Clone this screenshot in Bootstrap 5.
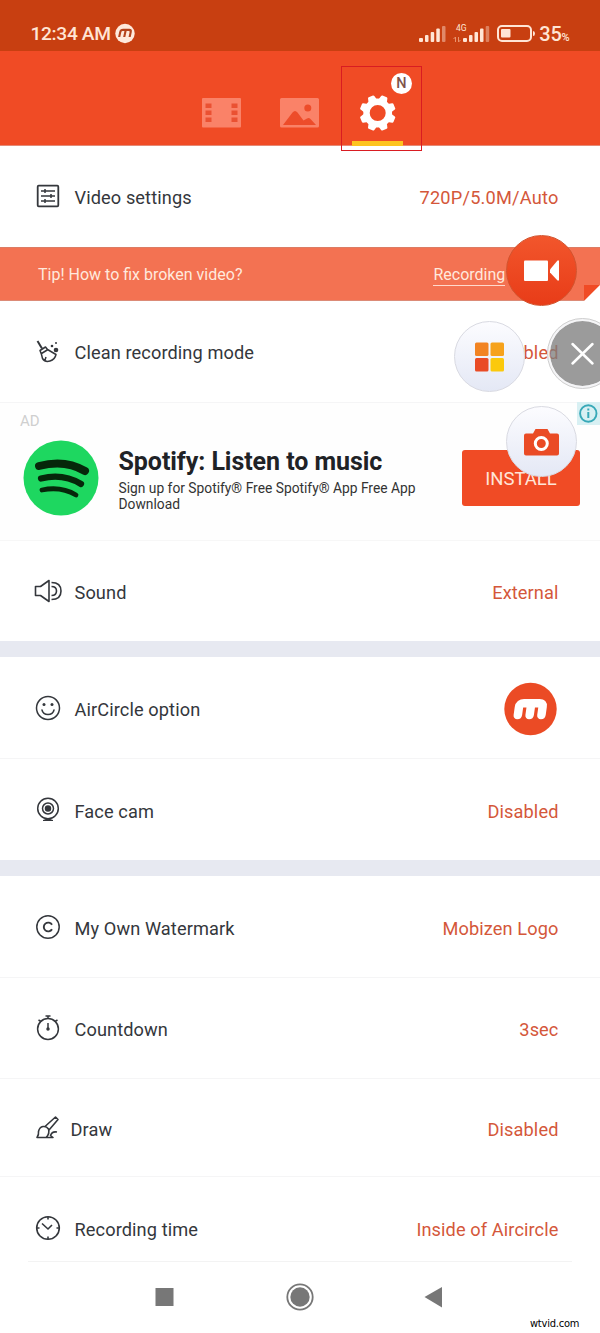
<!DOCTYPE html>
<html lang="en">
<head>
<meta charset="utf-8">
<meta name="viewport" content="width=device-width, initial-scale=1">
<title>Recorder settings</title>
<link href="https://cdn.jsdelivr.net/npm/bootstrap@5.3.0/dist/css/bootstrap.min.css" rel="stylesheet">
<style>
body{margin:0;background:#fff;font-family:Roboto,sans-serif;color:#34373c;overflow:hidden}
svg{display:block;flex:none}
.screen{width:600px;height:1333px;overflow:hidden;background:#fff}
.statusbar{height:51px;background:#c83f11;color:#ffe5d5;padding:17px 30.5px 0 30.5px}
.clock{font-size:19.2px;font-weight:500;line-height:34px;letter-spacing:-.35px}
.batt{font-size:20px;font-weight:500;line-height:34px;letter-spacing:-.2px}
.pct{font-size:11px}
.appbar{height:95px;background:#f04b25;border-bottom:1px solid #e58a76;padding-right:2px}
.tabslot{width:78px;height:95px}
.underbar{width:51px;height:5px;background:#fdc41f;bottom:0;left:14px}
.marker{left:341px;top:66px;width:81px;height:85px;border:1px solid #d91c22}
.newbadge{width:21px;height:21px;left:391px;top:73px;background:#fff;color:#80534b;font-size:14.5px;font-weight:500;line-height:21px}
.setrow{padding:3px 41.5px 0 34px;font-size:18.2px;line-height:24px;letter-spacing:.1px;border-bottom:1px solid #f5f5f6}
.lower{padding-top:5px}
.setrow svg{margin-right:12.5px;margin-top:-4px}
.val{color:#d4573a}
.gapbar{height:16px;background:#e7e9f1}
.tip{height:54px;background:#f37252;color:#ffe9dd;font-size:16px;padding:2px 0 0 38px;border-top:1px solid #dc7c64;border-bottom:1px solid #dc8b77}
.tiplink{margin-left:191px;border-bottom:1px solid #ffd9cc;line-height:20px}
.adbox{height:138px;background:#fefefe;border-bottom:1px solid #f7f7f7}
.adtag{left:20px;top:8px;font-size:15px;line-height:20px;color:#cfcfcf}
.adtitle{font-size:25px;font-weight:700;line-height:28px;color:#202226;letter-spacing:-.06px}
.adtext{font-size:13.8px;line-height:16px;color:#333}
.install{width:118px;height:56px;background:#f04b25;color:#ffe5d8;border-radius:3px;font-size:18.5px;line-height:58px}
.info{left:577px;top:402px}
.bubble{width:71px;height:71px}
.lightb{background:linear-gradient(#fcfcff,#e4e8f5);border:1px solid #d9dae2}
.recb{left:506px;top:235px;background:linear-gradient(#f2562c,#e83c18);border:1px solid #d2542f}
.gridb{left:454px;top:321px}
.closeb{left:547px;top:318px;background:rgba(125,125,125,.77);background-clip:padding-box;border:3px solid rgba(240,240,243,.65);outline:1px solid #cfcfcf;outline-offset:-1px}
.camb{left:506px;top:406px}
.navline{margin:0 28px;height:1px;background:#f3f3f3}
.sitemark{left:530px;top:1316px;font:11px/16px "DejaVu Sans Condensed","DejaVu Sans",sans-serif;color:#000;letter-spacing:-.22px}
</style>
</head>
<body>
<svg width="0" height="0" class="position-absolute"><defs>
<g id="mshape"><path d="M-11.800 6V-2q0-3.700 4-3.700H7.800q4 0 4 3.700V6M0-5V6" transform="skewX(-8)" fill="none" stroke-width="8.500" stroke-linecap="round" stroke-linejoin="round"/></g>
</defs></svg>
<div class="screen position-relative">
  <header class="statusbar d-flex align-items-start">
    <span class="clock">12:34 AM</span>
    <svg width="20" height="34" viewBox="0 0 20 34" style="margin-left:4px"><circle cx="10" cy="16.5" r="9.7" fill="#ffe9db"/><g transform="translate(10 16.5) scale(.36)" stroke="#b5431c"><path d="M-14 10V-4q0-6 6-6H9q6 0 6 6V10M0-9V10" transform="skewX(-12)" fill="none" stroke-width="6"/></g></svg>
    <svg class="ms-auto" width="119" height="34" viewBox="417 17 119 34">
      <g fill="#ffe5d5"><rect x="419" y="38" width="4" height="4" rx="1"/><rect x="425" y="35" width="3.500" height="7" rx="1"/><rect x="430.700" y="32" width="3.500" height="10" rx="1"/><rect x="436.300" y="28.500" width="3.500" height="13.500" rx="1"/><rect x="442" y="26" width="3.500" height="16" rx="1" opacity=".45"/>
      <rect x="463" y="38" width="4" height="4" rx="1"/><rect x="469" y="35" width="3.500" height="7" rx="1"/><rect x="474.500" y="32" width="3.500" height="10" rx="1"/><rect x="480" y="28.500" width="3.500" height="13.500" rx="1"/><rect x="485.700" y="26" width="3.500" height="16" rx="1" opacity=".4"/>
      <text x="456" y="31" font-size="8.500" font-family="Roboto,sans-serif">4G</text>
      <rect x="501" y="29" width="9.500" height="8.500" rx="1"/><path d="M533 31q2 0 2 2.500t-2 2.500z"/></g>
      <path d="M455.500 42v-5l-2 2M458.500 37v5l2-2" fill="none" stroke="#ea956f"/>
      <rect x="498" y="26" width="33" height="15" rx="4" fill="none" stroke="#ffe5d5" stroke-width="2"/>
    </svg>
    <span class="batt" style="margin-left:3.5px">35<span class="pct">%</span></span>
  </header>

  <nav class="appbar d-flex justify-content-center">
    <div class="tabslot"><svg width="78" height="94" viewBox="182 51 78 94"><rect x="202" y="98" width="39" height="29.500" rx="1" fill="#fa8268"/><g fill="#ea5132"><rect x="205.500" y="103.500" width="6" height="4.500"/><rect x="205.500" y="110.500" width="6" height="4.500"/><rect x="205.500" y="117.500" width="6" height="4.500"/><rect x="231.500" y="103.500" width="6" height="4.500"/><rect x="231.500" y="110.500" width="6" height="4.500"/><rect x="231.500" y="117.500" width="6" height="4.500"/></g></svg></div>
    <div class="tabslot"><svg width="78" height="94" viewBox="260 51 78 94"><rect x="280" y="98" width="39" height="29.500" rx="1.500" fill="#fa8268"/><path d="M283 125l9.500-12.500q2.500-3 5 0l6 8 3.500-2q2-1 3.500.5l5.500 6z" fill="#ed4c2a"/><circle cx="307.800" cy="108" r="3.500" fill="#ed4c2a"/></svg></div>
    <div class="tabslot position-relative"><svg width="78" height="94" viewBox="338 51 78 94"><g transform="translate(377.700 113)" fill="#fff"><circle r="11.200" fill="none" stroke="#fff" stroke-width="6.400"/><g id="quad"><path id="tooth" transform="rotate(22.500)" d="M-4.600-12.500l1.200-4.600q.3-.9 1.100-.9h4.600q.8 0 1.100.9l1.200 4.600z"/><use href="#tooth" transform="rotate(90)"/><use href="#tooth" transform="rotate(180)"/><use href="#tooth" transform="rotate(270)"/></g><use href="#quad" transform="rotate(45)"/></g></svg><span class="underbar position-absolute"></span></div>
  </nav>
  <div class="marker position-absolute"></div>
  <span class="newbadge position-absolute rounded-circle text-center">N</span>

  <main>
    <div class="setrow d-flex align-items-center border-0" style="height:101px">
      <svg width="28" height="28" viewBox="-14 -14 28 28" fill="none" stroke="#34373c" stroke-width="1.500"><rect x="-10.300" y="-10.300" width="20.600" height="20.600" rx="1" stroke-width="1.800"/><path d="M-7-5H7M-7 0H7M-7 5H7M-3-7v4M3-2v4M-3 3v4"/></svg>
      <span>Video settings</span><span class="val ms-auto" style="letter-spacing:.2px">720P/5.0M/Auto</span>
    </div>
    <div class="tip d-flex align-items-center"><span>Tip! How to fix broken video?</span><span class="tiplink">Recording</span>
      <svg class="position-absolute" style="left:584px;top:284px" width="16" height="17" viewBox="2 0 16 17"><path d="M2 17V1H18z" fill="#f04b25"/><path d="M2 17L18 1V17z" fill="#fff"/></svg>
    </div>
    <div class="setrow d-flex align-items-center" style="height:102px">
      <svg width="28" height="28" viewBox="-14 -14 28 28" fill="none" stroke="#34373c" stroke-width="1.500" stroke-linejoin="round"><path d="M-10.500-10l4.500 7.500" stroke-width="2"/><path d="M-8-.5l5.500-3.500 2 2.500 8.500 5q-1 5-6 6.500-5 1.500-7.500-2.500l-1-4zM-6.500 2.500L0-1.500M-3 9l1-3"/><g fill="#34373c" stroke="none"><circle cx="8" cy="-1" r="2.300"/><circle cx="4" cy="-5" r="1.300"/><circle cx="8" cy="-8" r="1"/></g></svg>
      <span>Clean recording mode</span><span class="val ms-auto">Enabled</span>
    </div>
    <section class="adbox position-relative d-flex align-items-center">
      <span class="adtag position-absolute">AD</span>
      <svg width="76" height="76" viewBox="-38 -38 76 76" style="margin-left:23px;margin-top:13px"><circle r="37.500" fill="#1ed760"/><g fill="none" stroke="#06270a" stroke-linecap="round"><path d="M-22-12Q4-19 24-7" stroke-width="8"/><path d="M-20 .5Q2-5 20 6" stroke-width="6.200"/><path d="M-19 12Q0 8 15 17" stroke-width="4.800"/></g></svg>
      <div style="width:310px;margin-left:19.5px;margin-top:17px"><div class="adtitle">Spotify: Listen to music</div><div class="adtext" style="margin-top:4px">Sign up for Spotify® Free Spotify® App Free App Download</div></div>
      <div class="install text-center" style="margin-left:33.5px;margin-top:13px">INSTALL</div>
    </section>
    <div class="setrow d-flex align-items-center border-0" style="height:100px">
      <svg width="28" height="28" viewBox="-14 -14 28 28" fill="none" stroke="#34373c" stroke-width="1.600" stroke-linejoin="round"><path d="M-12.500-4.500h5L1-10.500v21l-8.500-6h-5z"/><path d="M3.500-4.500q5 0 5 4.500t-5 4.500M3.500-8.500q9.500 0 9.500 8.500t-9.500 8.500"/></svg>
      <span>Sound</span><span class="val ms-auto">External</span>
    </div>
    <div class="gapbar"></div>
    <div class="setrow lower d-flex align-items-center" style="height:102px">
      <svg width="28" height="28" viewBox="-14 -14 28 28" fill="none" stroke="#34373c" stroke-width="1.500"><circle r="11.500"/><path d="M-6 2q1 4.500 6 4.500T6 2" stroke-linecap="round"/><g fill="#34373c" stroke="none"><circle cx="-4" cy="-3.500" r="1.500"/><circle cx="4" cy="-3.500" r="1.500"/></g></svg>
      <span>AirCircle option</span>
      <svg class="ms-auto me-0" width="56" height="56" viewBox="-27.500 -28 56 56" style="margin-top:-3px"><circle r="26.200" fill="#eb4b25"/><use href="#mshape" stroke="#fff"/></svg>
    </div>
    <div class="setrow lower d-flex align-items-center border-0" style="height:101px">
      <svg width="28" height="28" viewBox="-14 -14 28 28" fill="none" stroke="#34373c" stroke-width="1.500"><circle r="10.300" cy="-1.500"/><circle r="5.500" cy="-1.500"/><circle r="2.500" cy="-1.500" fill="#34373c"/><path d="M-5 10.500q5-3 10 0z" fill="#34373c" stroke-width="1"/></svg>
      <span>Face cam</span><span class="val ms-auto">Disabled</span>
    </div>
    <div class="gapbar"></div>
    <div class="setrow lower d-flex align-items-center" style="height:102px">
      <svg width="28" height="28" viewBox="-14 -14 28 28" fill="none" stroke="#34373c" stroke-width="1.500"><circle r="11.200"/><path d="M4-2.200A4.400 4.400 0 1 0 4 2.200" stroke-width="1.900"/></svg>
      <span>My Own Watermark</span><span class="val ms-auto">Mobizen Logo</span>
    </div>
    <div class="setrow d-flex align-items-center" style="height:101px">
      <svg width="28" height="28" viewBox="-14 -14 28 28" fill="none" stroke="#34373c" stroke-width="1.500"><circle r="10.400" cy="1"/><path d="M-2.500-12h5M0-12v3M-9.500-8l2.500 1.500M9.500-8L7-6.500M0-5v6"/><circle cy="1" r="1" fill="#34373c"/></svg>
      <span>Countdown</span><span class="val ms-auto">3sec</span>
    </div>
    <div class="setrow lower d-flex align-items-center" style="height:98px">
      <svg width="28" height="28" viewBox="-14 -14 28 28" fill="none" stroke="#34373c" stroke-width="1.600" stroke-linejoin="round" style="margin-right:8.500px"><path d="M-3-1.500L7.500-11l2.500 2.500L1 2M-5-1.500q3.500-.5 5.500 2.500 1.500 5-2.500 8.500h-9q2-2.500 1.500-6 1-4.500 4.500-5zM-2 9.500H5L2.500 7.500Q4 3 9 4"/></svg>
      <span>Draw</span><span class="val ms-auto">Disabled</span>
    </div>
    <div class="setrow d-flex align-items-center border-0" style="height:84px;padding-top:21px">
      <svg width="28" height="28" viewBox="-14 -14 28 28" fill="none" stroke="#34373c" stroke-width="1.600"><circle r="11.300"/><path d="M-6-4.500L0 1l4-4M-11 0h2.500M11 0H8.500M0-11v2.500M0 11V8.500"/></svg>
      <span>Recording time</span><span class="val ms-auto">Inside of Aircircle</span>
    </div>
    <div class="navline"></div>
  </main>
  <footer>
    <svg width="600" height="71" viewBox="0 1262 600 71"><g fill="#777"><rect x="155.500" y="1288" width="18" height="18"/><circle cx="300" cy="1297" r="9.700"/><path d="M424.500 1297L442 1287v20.500z"/></g><circle cx="300" cy="1297" r="12.700" fill="none" stroke="#777" stroke-width="1.800"/></svg>
  </footer>

  <svg class="info position-absolute" width="23" height="23" viewBox="577 402 23 23"><rect x="577" y="402" width="23" height="23" fill="#d8f0f3"/><circle cx="588.300" cy="413.500" r="8.200" fill="none" stroke="#38a9b8" stroke-width="1.900"/><path d="M588.300 412v6M588.300 408.500v2" stroke="#38a9b8" stroke-width="2"/></svg>
  <div class="bubble recb rounded-circle position-absolute"><svg width="69" height="69" viewBox="507 236 69 69" fill="#fff"><rect x="524" y="260.500" width="24" height="20.500" rx="1"/><path d="M550 269.500l7.500-9h1.500v20h-1.500l-7.500-8z"/></svg></div>
  <div class="bubble gridb lightb rounded-circle position-absolute"><svg width="69" height="69" viewBox="455 322 69 69"><rect x="475" y="342.500" width="13.500" height="13.500" rx="1.500" fill="#f28322"/><rect x="490.500" y="342.500" width="13.500" height="13.500" rx="1.500" fill="#f6a21c"/><rect x="475" y="358" width="13.500" height="13.500" rx="1.500" fill="#e94b25"/><rect x="490.500" y="358" width="13.500" height="13.500" rx="1.500" fill="#fbc90c"/></svg></div>
  <div class="bubble closeb rounded-circle position-absolute"><svg width="65" height="65" viewBox="550 321 65 65"><path d="M572.500 344L592.500 363.500M592.500 344L572.500 363.500" stroke="#fff" stroke-width="2.500" stroke-linecap="round"/></svg></div>
  <div class="bubble camb lightb rounded-circle position-absolute"><svg width="69" height="69" viewBox="507 407 69 69"><path d="M526 433.500h7l2.500-4.500h12l2.500 4.500h7q2 0 2 2v18q0 2-2 2h-31q-2 0-2-2v-18q0-2 2-2z" fill="#ea4b25"/><circle cx="541.300" cy="443.500" r="6" fill="none" stroke="#fff" stroke-width="3"/></svg></div>
  <span class="sitemark position-absolute">wtvid.com</span>
</div>
<script src="https://cdn.jsdelivr.net/npm/bootstrap@5.3.0/dist/js/bootstrap.bundle.min.js"></script>
</body>
</html>
